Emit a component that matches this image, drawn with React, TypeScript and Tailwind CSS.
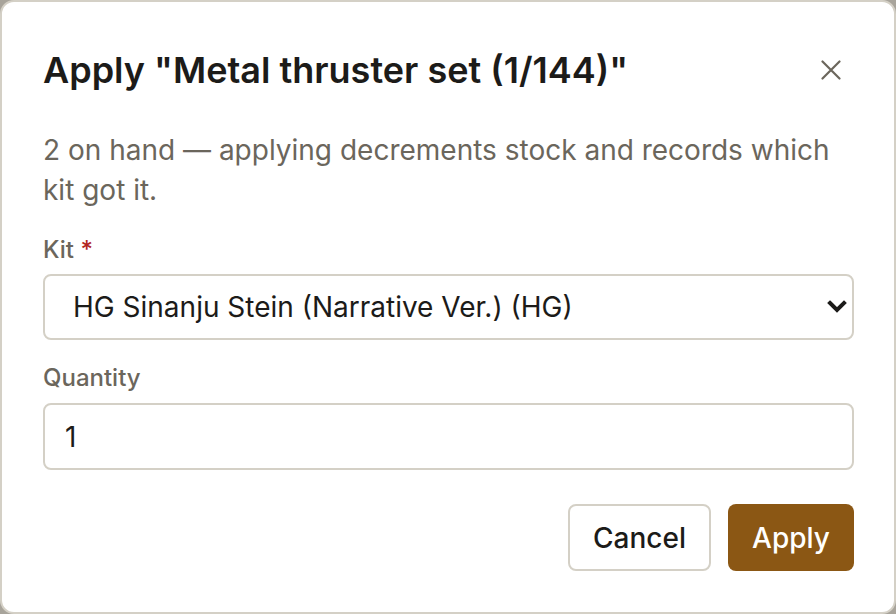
import React from "react";

export default function App() {
  return (
    <div className="w-[896px] h-[614px] bg-[#a8a49b] overflow-hidden" style={{ fontFamily: "Inter, 'Noto Sans', sans-serif" }}>
      <div className="w-[896px] h-[614px] rounded-[14px] border-2 border-[#d4d0c6] bg-white pl-[41px] pr-[40px] pt-[40px] pb-[40px] flex flex-col">
        <div className="flex items-center justify-between h-[56px]">
          <h2 className="text-[36px] leading-[56px] font-semibold text-[#1c1b19]">
            Apply "Metal thruster set (1/144)"
          </h2>
          <button className="w-[40px] h-[40px] flex items-center justify-center mr-[3px] text-[#6b665c]">
            <svg width="20" height="20" viewBox="0 0 20 20" fill="none" stroke="currentColor" strokeWidth="2.2" strokeLinecap="round">
              <path d="M1.5 1.5L18.5 18.5M18.5 1.5L1.5 18.5" />
            </svg>
          </button>
        </div>
        <p className="mt-[32px] text-[28px] leading-[40px] text-[#6b665c]">
          2 on hand — applying decrements stock and records which kit got it.
        </p>
        <label className="mt-[22px] text-[24px] leading-[36px] text-[#6b665c] font-medium">
          Kit <span className="text-[#b3261e]">*</span>
        </label>
        <div className="relative mt-[6px]">
          <select className="w-full h-[66px] appearance-none rounded-[8px] border-2 border-[#d4d0c6] bg-white pl-[28px] pr-[60px] text-[28px] text-[#1c1b19] outline-none">
            <option>HG Sinanju Stein (Narrative Ver.) (HG)</option>
          </select>
          <svg className="absolute right-[7px] top-[26px] pointer-events-none" width="20" height="13" viewBox="0 0 20 13" fill="none" stroke="#1c1b19" strokeWidth="4" strokeLinecap="square">
            <path d="M3 3L10 10L17 3" />
          </svg>
        </div>
        <label className="mt-[20px] text-[24px] leading-[36px] text-[#6b665c] font-medium">Quantity</label>
        <input
          type="text"
          defaultValue="1"
          className="mt-[7px] w-full h-[67px] rounded-[8px] border-2 border-[#d4d0c6] bg-white px-[20px] text-[28px] text-[#1c1b19] outline-none"
        />
        <div className="mt-[34px] flex justify-end gap-[17px]">
          <button className="w-[143px] h-[67px] rounded-[8px] border-2 border-[#d4d0c6] bg-white text-[28px] text-[#1c1b19] font-medium">
            Cancel
          </button>
          <button className="w-[126px] h-[67px] rounded-[8px] bg-[#8b5714] text-[28px] text-white font-medium">
            Apply
          </button>
        </div>
      </div>
    </div>
  );
}
